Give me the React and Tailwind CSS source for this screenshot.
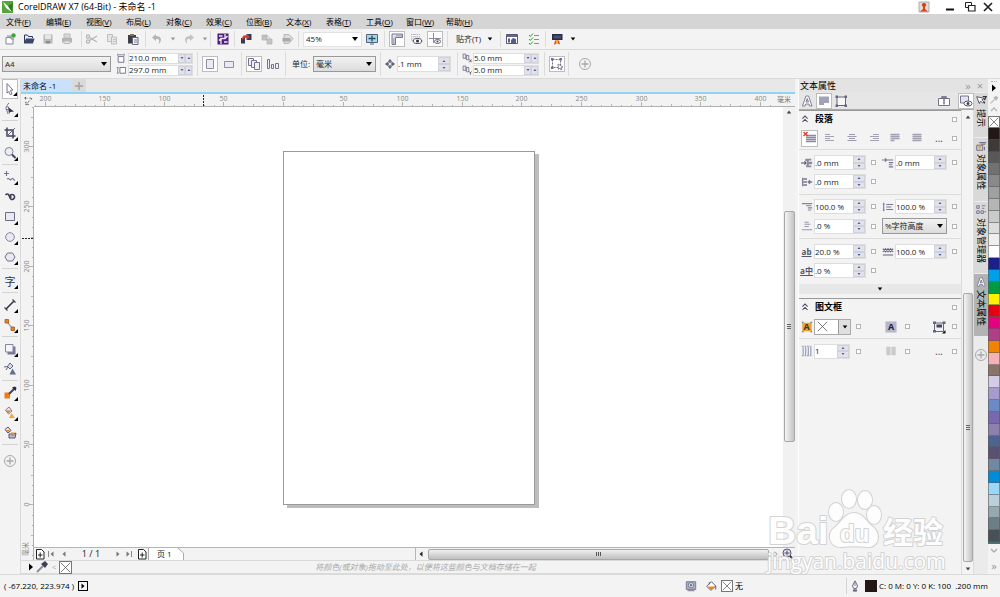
import { useState } from 'react'

const MENUS = [
  ['文件', 'F'], ['编辑', 'E'], ['视图', 'V'], ['布局', 'L'], ['对象', 'C'], ['效果', 'C'],
  ['位图', 'B'], ['文本', 'X'], ['表格', 'T'], ['工具', 'O'], ['窗口', 'W'], ['帮助', 'H'],
]

const SWATCHES = [
  '#231815', '#3e3a39', '#595757', '#727171', '#898989', '#9fa0a0', '#b5b5b6', '#c9caca', '#dcdddd',
  '#efefef', '#ffffff', '#1d2088', '#00a0e9', '#009944', '#fff100', '#e60012', '#e4007f', '#b04085',
  '#f08300', '#f5b1b5', '#8a7468', '#d3cce8', '#a69bcc', '#6e8ac6', '#7768b0', '#8d80ae', '#4d6490',
  '#5a5072', '#7088a4', '#008cd6', '#9bd7f6', '#b9cfdb', '#96a8b0', '#6e7e86', '#485058',
]

// 14 x 14 glyphs, one unit per pixel
const GLYPHS = {
  new: <><path d="M3 5.500h5l2 2V12H3z" fill="#fff" stroke="#85859d" /><path d="M4 4h4v3h3" fill="none" stroke="#85859d" /><circle cx="10.500" cy="3.500" r="2.200" fill="#3fa535" /></>,
  open: <><path d="M2.500 11V3h3l1 1.500h4V6" fill="#e6e9f2" stroke="#2f3a5c" /><path d="M2 11.500L4 6.500h8.500L11 11.500z" fill="#3a4669" /></>,
  save: <><path d="M2.500 2.500h9v9h-9z" fill="#b9b9b9" /><path d="M4 3h6v4H4z" fill="#e6e6e6" /><path d="M5 9h4v2.500H5z" fill="#8f8f8f" /></>,
  print: <><path d="M4 2h6v4H4z" fill="#d9d9d9" stroke="#bbb" /><path d="M2 6h10v4.500H2z" fill="#b5b5b5" /><path d="M4 9h6v2.500H4z" fill="#e6e6e6" stroke="#bbb" /></>,
  cut: <g fill="none" stroke="#b3b3b3" strokeWidth="1.200"><path d="M4.500 5.500L12 10M4.500 8.500L12 4" /><circle cx="3" cy="4.500" r="1.600" /><circle cx="3" cy="9.500" r="1.600" /></g>,
  copy: <g fill="#e6e6e6" stroke="#bdbdbd"><path d="M2.500 2.500h5v7h-5z" /><path d="M6.500 5h5v7h-5z" /><path d="M8 7.500h2.500M8 9.500h2.500" /></g>,
  paste: <><path d="M2 3h8v8.500H2z" fill="#3d3d45" /><path d="M4 2h4v2H4z" fill="#85714d" /><path d="M6.500 5.500h5.500v7H6.500z" fill="#f0f0f5" stroke="#666a7d" /><path d="M8 8h3M8 10h3" stroke="#85859d" /></>,
  undo: <path d="M6 2L2 5.500l4 3.500V7c3-.5 4 1 2.500 5C13 8.500 11 3.800 6 4z" fill="#b5b5b5" />,
  redo: <path d="M8 2l4 3.500L8 9V7c-3-.5-4 1-2.500 5C1 8.500 3 3.800 8 4z" fill="#c4c4c4" />,
  connect: <><path d="M1.500 1.500h11v11h-11z" fill="#4d1e7a" /><path d="M5 12V6.500h4V2M5 6.500L3 8.500M9 6.500l2.500-2.500M3 4h3.500M8 10h3.500" fill="none" stroke="#f0e9fc" strokeWidth="1.300" /></>,
  import: <><path d="M2 6h4v5.500H2z" fill="#353b52" /><path d="M7.500 2h5v6h-5z" fill="#353b52" /><path d="M3 6c1-3 3-3 5-2.500V2l3 3-3 2.500V6C6 5.500 5 6.500 3 8z" fill="#d73a25" /></>,
  export: <g fill="#c5c5c5" stroke="#b0b0b0" strokeWidth=".7"><path d="M2 3h5v5H2z" /><path d="M7 7h5v5H7z" /><path d="M3 6c2-3 6-3 7 1" fill="none" /></g>,
  pdf: <><path d="M3 2.500h5l4 4-4 5H3z" fill="#dcdcdc" stroke="#b8b8b8" /><path d="M1.500 6h8v3.500h-8z" fill="#aaa" /></>,
  fullscreen: <><path d="M1.500 2.500h11v8h-11z" fill="#a9d6e6" stroke="#50647d" /><path d="M7 3.500v6M3.500 6.500h7" stroke="#24506b" strokeWidth="1.300" /><path d="M5 12h4" stroke="#50647d" /></>,
  rulers: <><path d="M2 2h10.500v3.500h-7v7H2z" fill="#dfe0ee" stroke="#75758f" /><path d="M7 3v1.500M9 3v1.500M11 3v1.500M3 7h1.500M3 9h1.500M3 11h1.500" stroke="#75758f" /></>,
  gridEye: <><path d="M2 2.500h9M2 5h9M2 7.500h3M3 2v8M5.500 2v4M8 2v3M10.500 2v3" stroke="#a5a5b7" strokeWidth=".7" strokeDasharray="1 1" /><ellipse cx="8.500" cy="9" rx="4.300" ry="2.500" fill="#fff" stroke="#44445a" /><circle cx="8.500" cy="9" r="1.500" fill="#30303c" /></>,
  guideEye: <><path d="M5.500 1v10M1 6.500h12" stroke="#8c8ca1" /><ellipse cx="9.500" cy="9.500" rx="3" ry="2" fill="#fff" stroke="#65657d" /><circle cx="9.500" cy="9.500" r="1" fill="#44445a" /></>,
  options: <><path d="M1.500 2.500h11v9h-11z" fill="#fff" stroke="#55587d" /><path d="M2 3h10v2H2z" fill="#62668e" /><path d="M3 6.500h2v4H3zM6 8l2-2 3 1v4H6z" fill="#555c85" /></>,
  checklist: <><path d="M2 3l1.300 1.500L6 1.500M2 7l1.300 1.500L6 5.500M2 11l1.300 1.500L6 9.500" fill="none" stroke="#3a9c4a" /><path d="M7 3.500h5M7 7.500h5M7 11.500h5" stroke="#8a8aa0" /></>,
  launcher: <><path d="M2 2h10.500v6H2z" fill="#262c45" /><path d="M3.500 3.500h7.500v3H3.500z" fill="#485077" /><path d="M5 8.500h4l1 4-3-1.500L4 13z" fill="#e0452a" /><path d="M6 8.500h2v3H6z" fill="#ffb400" /></>,
  portrait: <path d="M3.500 2.500h7v9h-7z" fill="#eaeaf2" stroke="#8f8fa6" />,
  landscape: <path d="M2.500 4.500h9v6h-9z" fill="#eaeaf2" stroke="#8f8fa6" />,
  allPages: <g fill="#eeeef6" stroke="#75758f"><path d="M1.500 1.500h5v7h-5z" /><path d="M4.500 3.500h5v7h-5z" /><path d="M7.500 5.500h5v7h-5z" /></g>,
  curPage: <g fill="#eeeef6" stroke="#75758f"><path d="M1.500 2.500v9h2v-9z" /><path d="M5.500 7.500h2v4h-2z" /><path d="M9.500 6.500h3v5h-3z" /></g>,
  nudge: <><path d="M7 0l3 4H4zM7 14l3-4H4zM0 7l4-3v6zM14 7l-4-3v6z" fill="#55556b" /><path d="M5 5h4v4H5z" fill="#fff" stroke="#55556b" /></>,
  treat: <><path d="M2.500 2.500h8v8h-8z" fill="none" stroke="#6d6d88" strokeDasharray="2 1" /><path d="M1 1h2.500v2.500H1zM9.500 1H12v2.500H9.500zM1 9.500h2.500V12H1z" fill="#6d6d88" /><path d="M8 7l5 3-2 .5 1 2-1 .5-1-2-1.500 1.500z" fill="#fff" stroke="#6d6d88" strokeWidth=".8" /></>,
  plus: <g fill="none" stroke="#a9a9a9"><circle cx="7" cy="7" r="5.500" /><path d="M7 3.500v7M3.500 7h7" strokeWidth="1.300" /></g>,
  pick: <path d="M4 1.500l6 6.500-2.500.200L9 12l-1.700.800L6 9.500 4 11z" fill="#fff" stroke="#75758f" />,
  shape: <><path d="M6 1C2.500 4 3.500 8 5 12" fill="none" stroke="#75758f" /><path d="M5 5l6 4.500-4 .5-1 2z" fill="#34344a" /><path d="M3 5h2.500v2.500H3z" fill="#fff" stroke="#55556b" strokeWidth=".7" /></>,
  crop: <><path d="M4 1.500v8.500h8.500M1.500 4H10v8.500" fill="none" stroke="#44445c" strokeWidth="1.500" /><path d="M12 2L4 10" stroke="#62627c" /></>,
  zoom: <><circle cx="6" cy="5.500" r="4" fill="#ececf4" stroke="#85859d" /><path d="M9 8.500l3.500 3.500" stroke="#44445c" strokeWidth="2" /></>,
  freehand: <path d="M3.500 1v5M1 3.500h5M4 9c2-2 2.500 2 4 .5s2-2 2.500 0l1.500 1" fill="none" stroke="#72728a" strokeWidth="1.100" />,
  artistic: <path d="M2.500 5c2-2 3.500-.5 4 1.500s2 4 4 2.500 1-4.500-1.500-4.500-2 2.500-.5 3" fill="none" stroke="#3f3f57" strokeWidth="1.600" />,
  rect: <path d="M2.500 2.500h9v8h-9z" fill="#e9e9f2" stroke="#6d6d88" />,
  ellipse: <circle cx="7" cy="7" r="4.300" fill="#e9e9f2" stroke="#85859d" />,
  polygon: <path d="M4.500 3h5L12 7l-2.500 4h-5L2 7z" fill="#e9e9f2" stroke="#72728a" />,
  dimension: <><path d="M3 11L11 3" stroke="#33333f" strokeWidth="1.600" /><path d="M1.500 9.500l3 3M9.500 1.500l3 3" stroke="#44445c" strokeWidth="1.300" /></>,
  connector: <><path d="M4 4l6 7" stroke="#72728a" /><path d="M2 1.500h3.500V5H2zM8 9h3.500v3.500H8z" fill="#f08218" stroke="#914d18" strokeWidth=".7" /></>,
  shadow: <><path d="M4.500 4.500h8v8h-8z" fill="#77779a" /><path d="M2.500 2.500h7.500v7.500H2.500z" fill="#f4f4fb" stroke="#85859d" /></>,
  transparency: <><path d="M1 5l4-.5M4.500 4.500L7 1l3 3-3 3z" fill="#d9dbeb" stroke="#65657d" /><path d="M3 8l2-3" stroke="#65657d" /><path d="M9.500 6.500l3.500 6H6.500z" fill="#656c91" /></>,
  eyedropper: <><path d="M1.500 6.500H7V12.500H1.500z" fill="#ee7d12" /><path d="M6 8l5-5" stroke="#44445c" strokeWidth="2" /><path d="M9 1.500l3.500 3.500 1-3-1.500-1.500z" fill="#26263c" /></>,
  fill: <><path d="M2.500 4L6 1l3 4-3.500 3z" fill="#e8e8f0" stroke="#65657d" strokeWidth=".8" /><path d="M3 4.500h5L5.500 7z" fill="#dc7b24" /><path d="M8.500 7l3.500 5H6z" fill="#efad3f" /></>,
  smartFill: <><path d="M2 3.500L5 1l3 3.500L5 7z" fill="#e8e8f0" stroke="#55556b" /><path d="M3 4h4L5 6z" fill="#dc7b24" /><path d="M6 8h4l3-1-1 5H6z" fill="#bfc3da" stroke="#55556b" /><path d="M8 6.500h3.500V10H8z" fill="#e08a34" /></>,
  charA: <path d="M2.500 12L6 2h2.500L12 12H9.500L9 10H5.500L5 12zM6 8h2.500L7.200 4.500z" fill="#fff" stroke="#74748c" strokeWidth=".9" />,
  para: <path d="M2 2.500h10v6.500H7v2H2z" fill="#a3a3b8" />,
  frame: <><path d="M3 3h8.500v8.500H3z" fill="#f7f7fb" stroke="#65657d" /><path d="M1.500 1.500h2.500V4H1.500zM10.500 1.500H13V4h-2.500zM1.500 10.500h2.500V13H1.500zM10.500 10.500H13V13h-2.500zM6 2h2M6 12.500h2" fill="#65657d" /></>,
  help: <><path d="M1.500 4.500h11v7h-11z" fill="#fff" stroke="#75758f" /><path d="M5 5V3h4v2M7 4.500v6" fill="none" stroke="#65657d" strokeWidth="1.300" /></>,
  preview: <><path d="M1.500 2h8v7h-8z" fill="#e3e3ec" stroke="#75758f" /><ellipse cx="9" cy="9.500" rx="4" ry="2.500" fill="#fff" stroke="#55556b" /><circle cx="9" cy="9.500" r="1.500" fill="#44445c" /></>,
  noAlign: <><path d="M3 4.500h10M3 6.500h10M3 8.500h10M3 10.500h10" stroke="#8a8aa2" strokeWidth="1.500" /><path d="M.5 1l4 4M4.500 1l-4 4" stroke="#e0402a" strokeWidth="1.500" /></>,
  alignL: <path d="M2 3.500h5M2 5.500h9M2 7.500h5M2 9.500h9" stroke="#a2a2b1" strokeWidth="1.200" />,
  alignC: <path d="M4 3.500h6M2.500 5.500h9M4 7.500h6M2.500 9.500h9" stroke="#9c9cad" strokeWidth="1.200" />,
  alignR: <path d="M6 3.500h6M3 5.500h9M6 7.500h6M3 9.500h9" stroke="#a2a2b1" strokeWidth="1.200" />,
  justify: <path d="M2.500 3.500h9M2.500 5.500h9M2.500 7.500h9M2.500 9.500h4" stroke="#a2a2b1" strokeWidth="1.500" />,
  force: <path d="M2.500 3.500h9M2.500 5.500h9M2.500 7.500h9M2.500 9.500h9" stroke="#a2a2b1" strokeWidth="1.500" />,
  indentL: <><path d="M5 2h7v2H9v1.500h4v3H9V10h3v2H6V9h1V5H5z" fill="#8b8ba0" /><path d="M0 7h6M4 5l2 2-2 2" fill="none" stroke="#55556b" strokeWidth="1.200" /></>,
  indentF: <path d="M0 3.500h5M3.500 1.500l2 2-2 2M6 3.500h7M8 6.500h5M8 9h4M8 11.500h5" fill="none" stroke="#77778f" strokeWidth="1.300" />,
  indentR: <path d="M2 2v10M3 3.500h4M3 7h4M3 10.500h4M13 7H8M10.500 5L8.500 7l2 2" fill="none" stroke="#77778f" strokeWidth="1.500" />,
  before: <path d="M1 3h12M6 5.500h6M8 8h5M8 10.500h4" stroke="#85859b" strokeWidth="1.300" />,
  line: <path d="M2 2v10M1 3.500h2M1 10.500h2M5 4h8M5 7h6M5 10h8" stroke="#77778f" strokeWidth="1.200" />,
  after: <path d="M4 2.500h5M4 5h7M4 7.500h5M1 11.500h12" stroke="#9a9aaa" strokeWidth="1.200" />,
  word: <path d="M1 3l3 4 3-4 3 4 3-4M1 7l3-4 3 4 3-4 3 4M1 10.500h12" stroke="#62627c" strokeWidth="1.200" fill="none" />,
  frameFill: <><path d="M1.500 2h11v10h-11z" fill="#f0a22c" /><path d="M1 1.500h2M11 1.500h2M1 12.500h2M11 12.500h2" stroke="#62627c" strokeWidth="1.300" /></>,
  textBg: <path d="M.5 .5h13v13H.5z" fill="#b7b7ca" />,
  frameAlign: <><path d="M2.500 3h9v8.500h-9z" fill="#f0f0f7" stroke="#65657d" /><path d="M1 1.500h3V4H1zM10.500 1.500h3V4h-3zM1 10h3v2.500H1z" fill="#65657d" /><path d="M4.500 4.500h5.500v3H4.500z" fill="#44445c" /><path d="M13.500 10v3.500H10z" fill="#111" /></>,
  cols: <><path d="M2.500 2.500v9.500M5.500 2.500v9.500M8.500 2.500v9.500M11.500 2.500v9.500" stroke="#7580a0" /><path d="M1 1.500h12M1 12.500h12" stroke="#85859b" strokeDasharray="2 1" /></>,
  evenCols: <path d="M1.500 2h5v10h-5zM7.500 2h5v10h-5z" fill="#cacaca" />,
  hint: <><path d="M2 2l3 8 1.500-3L9 9.500 10.500 8 8 5.500 11 4z" fill="#fff" stroke="#44445c" /><path d="M9 2h4l-2 4M11 8v2" stroke="#33333f" fill="none" strokeWidth="1.400" /></>,
  objProps: <><path d="M2 6h7v6H2z" fill="#cdd0e4" stroke="#65657d" /><path d="M5 3h8M7 5h5M11 8v4" stroke="#72728a" strokeWidth="1.300" /><path d="M4 7h3v3H4z" fill="#e0a14a" /></>,
  objManager: <path d="M2 2h3v3H2zM8 2h4M8 5h3M2 8h3v3H2zM7 8h3v3H7zM11 9h2" fill="#c9cce2" stroke="#72728a" />,
  picker: <><path d="M2 12l6-6" stroke="#8b8b9a" strokeWidth="1.800" /><path d="M6 4l4 4 3-4-3-3z" fill="#3d4255" /></>,
  pickerOff: <><path d="M2 12l6-6" stroke="#c4c4c4" strokeWidth="1.800" /><path d="M6 4l4 4 3-4-3-3z" fill="#b5b5b5" /></>,
  addPage: <><path d="M3.500 2.500h5l2.500 2.500v7H3.500z" fill="#fff" stroke="#222" /><path d="M7.200 5.500v5M5 8h4.500" stroke="#222" /></>,
  navigator: <><circle cx="6" cy="6" r="4" fill="#dfe1ee" stroke="#55556b" /><path d="M9 9l4 4" stroke="#33333f" strokeWidth="1.800" /><path d="M6 3.500v5M3.500 6h5" stroke="#55556b" /></>,
  proof: <><path d="M1.500 2h11v9h-11z" fill="#a9adc6" stroke="#6d7191" /><circle cx="7" cy="6" r="3.200" fill="#e6cbd1" stroke="#5e8295" /><circle cx="7" cy="6" r="1.200" fill="#65657d" /><path d="M3 12.500h8" stroke="#65657d" /></>,
  bucket: <><path d="M2 7.500L7.500 2l5 5L7 12z" fill="#fff" stroke="#44445c" /><path d="M3.500 7.500h8L7 12z" fill="#ee8420" /><path d="M5 5V2.500M12.500 7v4" stroke="#44445c" /></>,
  pen: <><path d="M7 1L4 7l1.500 3h3L10 7z" fill="#f2f2f8" stroke="#55556b" /><path d="M7 3v4M5 11.500h4v1.500H5z" fill="#77778f" stroke="#55556b" strokeWidth=".8" /></>,
  user: <><path d="M2 2h10v10H2z" fill="#e3dcd6" stroke="#b0aca8" /><path d="M7 3a2 2 0 0 1 1 3.800V9l3 2.500H3L6 9V6.800A2 2 0 0 1 7 3z" fill="#d8431f" /></>,
  restore: <><path d="M2.500 2.500h6v5h-6z" fill="#fff" stroke="#222" /><path d="M5.500 5.500h6.500v5.500H5.500z" fill="#fff" stroke="#222" strokeWidth="1.200" /></>,
  close: <path d="M3 3l8 8M11 3l-8 8" stroke="#222" strokeWidth="1.700" />,
  minimize: <path d="M3 9.500h8" stroke="#111" strokeWidth="2" />,
  origin: <><path d="M2 3h4M3.500 1.500V5M5 11l5-5" stroke="#33333f" strokeWidth="1.200" strokeDasharray="2 1" /><path d="M9 3h3v3M4 8v4h4" fill="none" stroke="#33333f" strokeWidth="1.200" strokeDasharray="2 1" /></>,
  cross: <path d="M1 1l12 12M13 1L1 13" stroke="#444" strokeWidth=".9" />,
  width: <><path d="M3 5h8v8H3z" fill="#fff" stroke="#65657d" strokeWidth="1.200" /><path d="M2.500 1v3M11.500 1v3M3 2.500h8" stroke="#65657d" /></>,
  height: <><path d="M5.500 3.500h8v8h-8z" fill="#fff" stroke="#65657d" strokeWidth="1.200" /><path d="M1 3.500h3M1 11.500h3M2.500 4v7" stroke="#65657d" /></>,
  dupX: <><path d="M1.500 1.500h4v6h-4zM6 3.500h3.500v6H6z" fill="#e5e5f0" stroke="#62627c" /><path d="M10 9l3.500 4M13.500 9L10 13" stroke="#33333f" /></>,
  dupY: <><path d="M1.500 1.500h4v6h-4zM6 3.500h3.500v6H6z" fill="#e5e5f0" stroke="#62627c" /><path d="M10 9l1.700 2L13.500 9M11.700 11v2.500" stroke="#33333f" fill="none" /></>,
  collapse: <path d="M4 6.500l3-3 3 3M4 10.500l3-3 3 3" fill="none" stroke="#44445c" strokeWidth="1.200" />,
}

function Glyph({ name, className = 'size-3.5' }) {
  return <svg viewBox="0 0 14 14" className={`shrink-0 ${className}`} aria-hidden="true">{GLYPHS[name]}</svg>
}

const ARROWS = { down: 'M1 2h6L4 6z', up: 'M1 6h6L4 2z', left: 'M6 0.500v7L2 4z', right: 'M2 0.500v7L6 4z' }

function Arrow({ dir, className = 'size-2 fill-black' }) {
  return <svg viewBox="0 0 8 8" className={`shrink-0 ${className}`} aria-hidden="true"><path d={ARROWS[dir]} /></svg>
}

function Tool({ name, label, boxed, className = 'size-4' }) {
  return (
    <button
      type="button"
      aria-label={label}
      className={`flex shrink-0 items-center justify-center ${boxed ? 'border border-[#bdbdbd] bg-white' : ''} ${className}`}
    >
      <Glyph name={name} />
    </button>
  )
}

function Group({ className, children }) {
  return <div className={`my-0.5 flex shrink-0 items-center border-r border-[#dcdcdc] ${className}`}>{children}</div>
}

function Drop({ label, value, className }) {
  return (
    <div className={`relative flex shrink-0 items-center ${className}`}>
      <select aria-label={label} className="h-full w-full appearance-none pl-0.5 outline-none">
        <option>{value}</option>
      </select>
      <Arrow dir="down" className="pointer-events-none absolute right-0.5 size-2 fill-black" />
    </div>
  )
}

// number box with its two arrows; `flat` puts them side by side
function Spin({ label, value, flat, className = 'h-[15px] w-[52px]' }) {
  return (
    <div className={`flex shrink-0 border border-[#dedede] bg-white ${className}`}>
      <input aria-label={label} defaultValue={value} className="min-w-0 flex-1 bg-transparent outline-none" />
      <div className={`flex bg-[#e2e3ea] ${flat ? 'w-3.5 flex-row-reverse' : 'w-3 flex-col'}`}>
        <button type="button" aria-label={`${label} +`} className="flex min-h-0 flex-1 items-center justify-center border border-[#d0d1d9]">
          <Arrow dir="up" className="size-1 fill-[#4a5cab]" />
        </button>
        <button type="button" aria-label={`${label} -`} className="flex min-h-0 flex-1 items-center justify-center border border-[#d0d1d9]">
          <Arrow dir="down" className="size-1 fill-[#4a5cab]" />
        </button>
      </div>
    </div>
  )
}

function Lock({ label }) {
  return <input type="checkbox" aria-label={label} className="size-[5px] shrink-0 appearance-none justify-self-center border border-[#b5b5b5] bg-white" />
}

function TitleBar() {
  return (
    <header className="flex h-[14px] shrink-0 items-center bg-white pl-0.5 text-[9px] text-black">
      <svg viewBox="0 0 12 12" className="mr-1 size-3" aria-hidden="true">
        <path d="M0 0h11v12H0z" fill="#55a53a" />
        <path d="M1 1l5 4 4 6-6-4z" fill="#fff" />
        <path d="M11 2L6 5l4 6z" fill="#2f7a27" />
      </svg>
      <h1>CorelDRAW X7 (64-Bit) - 未命名 -1</h1>
      <div className="ml-auto flex items-center pr-1">
        <Tool name="user" label="用户" className="mr-2 h-3.5 w-4" />
        <Tool name="minimize" label="最小化" className="h-3.5 w-5" />
        <Tool name="restore" label="还原" className="h-3.5 w-5" />
        <Tool name="close" label="关闭" className="h-3.5 w-4" />
      </div>
    </header>
  )
}

function MenuBar() {
  return (
    <nav className="flex h-[15px] shrink-0 items-center bg-[#d5d5d5] pl-1.5 text-black">
      {MENUS.map(([name, key]) => (
        <button key={name} type="button" className="w-10 shrink-0 text-left whitespace-nowrap">
          {name}(<u>{key}</u>)
        </button>
      ))}
    </nav>
  )
}

function StandardBar() {
  return (
    <div className="flex h-[21px] shrink-0 border-b border-[#dadada]">
      <Group className="w-[82px] justify-around pr-1">
        <Tool name="new" label="新建" />
        <Tool name="open" label="打开" />
        <Tool name="save" label="保存" />
        <Tool name="print" label="打印" />
      </Group>
      <Group className="w-16 justify-around pr-0.5">
        <Tool name="cut" label="剪切" />
        <Tool name="copy" label="复制" />
        <Tool name="paste" label="粘贴" />
      </Group>
      <Group className="w-[65px] justify-around">
        <Tool name="undo" label="撤消" />
        <Arrow dir="down" className="size-1.5 fill-[#9a9a9a]" />
        <Tool name="redo" label="重做" />
        <Arrow dir="down" className="size-1.5 fill-[#9a9a9a]" />
      </Group>
      <Group className="w-6 justify-center">
        <Tool name="connect" label="搜索内容" />
      </Group>
      <Group className="w-16 justify-around">
        <Tool name="import" label="导入" />
        <Tool name="export" label="导出" />
        <Tool name="pdf" label="发布为 PDF" />
      </Group>
      <Group className="w-[86px] gap-0.5 pl-1">
        <Drop label="缩放级别" value="45%" className="h-[15px] w-[59px] border border-[#e2e2e2] bg-white" />
        <Tool name="fullscreen" label="全屏预览" />
      </Group>
      <Group className="w-[63px] justify-between px-1">
        <Tool name="rulers" label="显示标尺" boxed />
        <Tool name="gridEye" label="显示网格" />
        <Tool name="guideEye" label="显示辅助线" boxed />
      </Group>
      <Group className="w-[53px] pl-2">
        <button type="button" className="flex items-center gap-1.5 whitespace-nowrap">
          贴齐(T)
          <Arrow dir="down" className="size-1.5 fill-black" />
        </button>
      </Group>
      <Group className="w-[45px] justify-around">
        <Tool name="options" label="选项" />
        <Tool name="checklist" label="设置" />
      </Group>
      <button type="button" aria-label="应用程序启动器" className="flex items-center gap-1.5 pl-1">
        <Glyph name="launcher" />
        <Arrow dir="down" className="size-1.5 fill-black" />
      </button>
    </div>
  )
}

function PropertyBar() {
  return (
    <div className="flex h-[29px] shrink-0 border-b border-[#dadada]">
      <Group className="w-[198px] gap-[5px] pl-0.5">
        <Drop label="页面大小" value="A4" className="h-4 w-[109px] border border-[#999] bg-linear-to-b from-[#f2f2f2] to-[#dcdcdc]" />
        <div className="flex flex-col gap-px">
          <label className="flex items-center gap-0.5">
            <Glyph name="width" className="size-2.5" />
            <Spin label="页面宽度" value="210.0 mm" flat className="h-[11px] w-[65px]" />
          </label>
          <label className="flex items-center gap-0.5">
            <Glyph name="height" className="size-2.5" />
            <Spin label="页面高度" value="297.0 mm" flat className="h-[11px] w-[65px]" />
          </label>
        </div>
      </Group>
      <Group className="w-11 justify-between px-1">
        <Tool name="portrait" label="纵向" boxed />
        <Tool name="landscape" label="横向" />
      </Group>
      <Group className="w-11 justify-between px-1">
        <Tool name="allPages" label="所有页面" boxed />
        <Tool name="curPage" label="当前页" />
      </Group>
      <Group className="w-[95px] justify-between pr-1 pl-1.5">
        <span className="whitespace-nowrap">单位:</span>
        <Drop label="单位" value="毫米" className="h-4 w-[63px] border border-[#999] bg-linear-to-b from-[#f2f2f2] to-[#dcdcdc]" />
      </Group>
      <Group className="w-[77px] justify-between pr-1.5 pl-1">
        <Glyph name="nudge" className="size-2.5" />
        <Spin label="微调距离" value=".1 mm" className="h-4 w-[54px]" />
      </Group>
      <Group className="w-[87px] pl-1">
        <div className="flex flex-col gap-px">
          <label className="flex items-center gap-px">
            <Glyph name="dupX" className="size-2.5" />
            <Spin label="再制距离 X" value="5.0 mm" flat className="h-[11px] w-[66px]" />
          </label>
          <label className="flex items-center gap-px">
            <Glyph name="dupY" className="size-2.5" />
            <Spin label="再制距离 Y" value="5.0 mm" flat className="h-[11px] w-[66px]" />
          </label>
        </div>
      </Group>
      <Group className="w-6 justify-center">
        <Tool name="treat" label="所有对象视为已填充" boxed />
      </Group>
      <Tool name="plus" label="自定义" className="ml-2 h-full w-4" />
    </div>
  )
}

const TOOL_GROUPS = [
  [['pick', '选择', 1], ['shape', '形状', 1]],
  [['crop', '裁剪', 1], ['zoom', '缩放', 1]],
  [['freehand', '手绘', 1], ['artistic', '艺术笔'], ['rect', '矩形', 1], ['ellipse', '椭圆形', 1], ['polygon', '多边形', 1]],
  [['text', '文本', 1]],
  [['dimension', '平行度量', 1], ['connector', '直线连接器', 1]],
  [['shadow', '阴影', 1], ['transparency', '透明度']],
  [['eyedropper', '颜色滴管', 1], ['fill', '交互式填充', 1], ['smartFill', '智能填充']],
]

function Toolbox() {
  const [active, setActive] = useState('pick')

  return (
    <aside className="flex w-[21px] shrink-0 flex-col items-center border-r border-[#dadada]">
      {TOOL_GROUPS.map((group) => (
        <div key={group[0][0]} className="border-b border-[#d3d3d3] pt-0.5 pb-px first:pt-0">
          {group.map(([name, label, flyout]) => (
            <button
              key={name}
              type="button"
              aria-label={label}
              onClick={() => setActive(name)}
              className={`relative flex h-5 w-4 items-center justify-center ${active === name ? 'border border-[#bcbcbc] bg-white' : ''}`}
            >
              {name === 'text' ? <span className="text-[11px] leading-none text-[#33334a]">字</span> : <Glyph name={name} />}
              {flyout && (
                <svg viewBox="0 0 4 4" className="absolute right-0 bottom-0.5 size-1" aria-hidden="true"><path d="M4 0v4H0z" /></svg>
              )}
            </button>
          ))}
        </div>
      ))}
      <Tool name="plus" label="自定义" className="h-8 w-4" />
    </aside>
  )
}

const STEP = 59.6
const MAJORS = Array.from({ length: 26 }, (_, i) => i - 9)
const MINORS = [1, 2, 3, 4, 5]

function HRuler() {
  return (
    <svg className="h-[13px] min-w-0 flex-1" aria-label="水平标尺">
      {MAJORS.map((m) => {
        const x = Math.round(249 + m * STEP) + 0.5
        return (
          <g key={m} stroke="#b3b3b3">
            <path d={`M${x} 8v4`} />
            {MINORS.map((n) => <path key={n} d={`M${Math.round(x + (n * STEP) / 6) + 0.5} ${n === 3 ? 10 : 11}v2`} />)}
            {m >= -4 && m <= 8 && (
              <text x={x} y="7" textAnchor="middle" stroke="none" fill="#8a8a8a" className="text-[7px]">{Math.abs(m * 50)}</text>
            )}
          </g>
        )
      })}
      <path d="M169.500 1v12" stroke="#222" strokeDasharray="2 1" />
      <path d="M0 12.500h2000" stroke="#b0b0b0" />
    </svg>
  )
}

function VRuler() {
  return (
    <div className="relative w-[13px] shrink-0">
      <svg className="absolute inset-0 h-full w-full" aria-label="垂直标尺">
        {MAJORS.map((m) => {
          const y = Math.round(397 - m * STEP) + 0.5
          return (
            <g key={m} stroke="#b3b3b3">
              <path d={`M8 ${y}h4`} />
              {MINORS.map((n) => <path key={n} d={`M${n === 3 ? 10 : 11} ${Math.round(y - (n * STEP) / 6) + 0.5}h2`} />)}
              {m >= 0 && m <= 6 && (
                <text transform={`translate(8 ${y}) rotate(-90)`} textAnchor="middle" stroke="none" fill="#8a8a8a" className="text-[7px]">{m * 50}</text>
              )}
            </g>
          )
        })}
        <path d="M1 131.500h12" stroke="#222" strokeDasharray="2 1" />
        <path d="M12.500 0v2000" stroke="#b0b0b0" />
      </svg>
      <span className="absolute bottom-1 left-0 rotate-180 text-[7px] leading-[10px] text-[#8a8a8a] [text-orientation:sideways] [writing-mode:vertical-rl]">毫米</span>
    </div>
  )
}

function PageNav() {
  return (
    <div className="flex h-[13px] shrink-0 border-t border-[#b5b5b5]">
      <div className="flex w-[381px] shrink-0 items-center">
        <Tool name="addPage" label="在前面添加页" className="h-3 w-3" />
        <button type="button" aria-label="第一页" className="ml-0.5 flex items-center"><i className="h-1.5 w-px bg-[#888]" /><Arrow dir="left" className="size-1.5 fill-[#777]" /></button>
        <button type="button" aria-label="上一页" className="ml-1.5"><Arrow dir="left" className="size-1.5 fill-[#777]" /></button>
        <span className="w-12 text-center text-[9px]">1 / 1</span>
        <button type="button" aria-label="下一页"><Arrow dir="right" className="size-1.5 fill-[#777]" /></button>
        <button type="button" aria-label="最后一页" className="ml-1 mr-1 flex items-center"><Arrow dir="right" className="size-1.5 fill-[#777]" /><i className="h-1.5 w-px bg-[#888]" /></button>
        <Tool name="addPage" label="在后面添加页" className="h-3 w-3" />
        <div className="flex h-full items-center">
          <button type="button" className="h-full border-l border-[#aaa] bg-white pr-1 pl-2 leading-none whitespace-nowrap">页 1</button>
          <svg viewBox="0 0 8 12" className="h-full w-2" aria-hidden="true"><path d="M0 0l8 6v6H0z" fill="#fff" /><path d="M2 0l5.500 5v7" fill="none" stroke="#aaa" /></svg>
        </div>
      </div>
      <div className="flex min-w-0 flex-1 items-center border-l border-[#b5b5b5]">
        <Arrow dir="left" className="mx-0.5 size-1.5 fill-[#222]" />
        <div className="ml-0.5 flex h-[11px] min-w-0 flex-1 items-center justify-center gap-px rounded-xs border border-[#a8a8a8] bg-linear-to-b from-[#f0f0f0] to-[#bfbfbf]">
          <i className="h-1 w-px bg-[#555]" /><i className="h-1 w-px bg-[#555]" /><i className="h-1 w-px bg-[#555]" />
        </div>
        <Arrow dir="right" className="mr-0.5 ml-1 size-1.5 fill-[#222]" />
        <Tool name="navigator" label="导航器" className="h-3 w-3.5" />
      </div>
    </div>
  )
}

function VThumb({ className }) {
  return (
    <div className={`flex flex-col items-center justify-center gap-px rounded-xs border border-[#a8a8a8] bg-linear-to-r from-[#f4f4f4] to-[#c4c4c4] ${className}`}>
      <i className="h-px w-1 bg-[#666]" /><i className="h-px w-1 bg-[#666]" /><i className="h-px w-1 bg-[#666]" />
    </div>
  )
}

function Workspace() {
  return (
    <main className="flex min-w-0 flex-1 flex-col">
      <div className="flex h-[13px] shrink-0 items-center bg-[#e8e8e8]">
        <button type="button" className="h-full w-[51px] bg-[#cbe1fb] pl-0.5 text-left leading-none whitespace-nowrap text-black">未命名 -1</button>
        <button type="button" aria-label="新建文档" className="flex h-full w-3.5 items-center justify-center bg-[#dadada]">
          <svg viewBox="0 0 8 8" className="size-2"><path d="M4 0v8M0 4h8" stroke="#a3a3a3" strokeWidth="1.500" /></svg>
        </button>
      </div>
      <div className="h-0.5 shrink-0 bg-[#8fd3f5]" />
      <div className="flex shrink-0">
        <div className="flex w-[13px] items-center justify-center"><Glyph name="origin" className="size-2.5" /></div>
        <HRuler />
        <span className="w-[18px] border-b border-[#b0b0b0] text-[7px] leading-[11px] whitespace-nowrap text-[#777]">毫米</span>
      </div>
      <div className="flex min-h-0 flex-1">
        <VRuler />
        <div className="flex min-w-0 flex-1 flex-col">
          <div className="flex min-h-0 flex-1">
            <div className="min-w-0 flex-1 overflow-hidden bg-white pt-11 pl-[249px]">
              <div className="h-[354px] w-[252px] border border-[#9a9a9a] bg-white shadow-[4px_3px_0_#bdbdbd]" />
            </div>
            <div className="flex w-3 shrink-0 flex-col items-center bg-[#f1f1f1]">
              <Arrow dir="up" className="mt-0.5 size-1.5 fill-[#444]" />
              <div className="flex-[97]" />
              <VThumb className="w-[11px] flex-[230]" />
              <div className="flex-[106]" />
            </div>
          </div>
          <PageNav />
        </div>
      </div>
      <div className="flex h-[14px] shrink-0 items-center border-t border-b border-[#dadada] pl-1.5">
        <Arrow dir="right" className="size-2 fill-black" />
        <Tool name="picker" label="滴管" className="h-3 w-3.5" />
        <span className="w-2.5 text-center text-[#aaa]">&lt;</span>
        <button type="button" aria-label="无填充" className="flex size-[13px] items-center justify-center border border-[#777] bg-white"><Glyph name="cross" className="size-[11px]" /></button>
        <p className="flex-1 pr-4 text-center whitespace-nowrap text-[#a8a8a8] italic">将颜色(或对象)拖动至此处，以便将这些颜色与文档存储在一起</p>
      </div>
    </main>
  )
}

function SectionTitle({ children }) {
  return (
    <h2 className="flex h-[17px] items-center border-t border-[#999] text-[9px] font-bold text-black">
      <Glyph name="collapse" className="size-3" />
      <span className="ml-1">{children}</span>
      <span className="ml-auto flex w-3.5 justify-center"><Lock label={`${children}锁定`} /></span>
    </h2>
  )
}

function Row({ left, right }) {
  return (
    <div className="grid h-[19px] grid-cols-[15px_52px_14px_15px_52px_14px] items-center">
      {[left, right].map((f) => f && (
        <div key={f[1]} className="contents">
          {f[0] === 'ab' || f[0] === 'a中'
            ? <span className="text-center text-[8px] leading-none font-bold whitespace-nowrap text-[#55556b] underline">{f[0]}</span>
            : <Glyph name={f[0]} className="size-3 justify-self-center" />}
          <Spin label={f[1]} value={f[2]} />
          <Lock label={`${f[1]}锁定`} />
        </div>
      ))}
    </div>
  )
}

function TextDocker() {
  return (
    <section className="flex min-w-0 flex-1 flex-col">
      <div className="flex h-[17px] shrink-0 items-center bg-[#e6e6e6]">
        <Tool name="charA" label="字符" />
        <Tool name="para" label="段落" boxed className="ml-px size-4" />
        <Tool name="frame" label="图文框" className="ml-px size-4" />
        <Tool name="help" label="显示提示" className="mr-1.5 ml-auto size-4" />
        <Tool name="preview" label="预览" boxed />
      </div>
      <div className="flex min-h-0 flex-1 border-t border-[#aaa]">
        <div className="flex w-[162px] flex-col">
          <SectionTitle>段落</SectionTitle>
          <div className="flex h-[23px] items-center border-b border-[#dcdcdc] pl-0.5">
            <Tool name="noAlign" label="无对齐" boxed className="mr-1 size-[17px]" />
            <div className="flex flex-1 justify-between">
              <Tool name="alignL" label="左对齐" />
              <Tool name="alignC" label="居中" />
              <Tool name="alignR" label="右对齐" />
              <Tool name="justify" label="两端对齐" />
              <Tool name="force" label="强制两端对齐" />
              <button type="button" aria-label="调整" className="w-4 text-center text-[10px] leading-none text-[#44445c]">...</button>
            </div>
            <span className="flex w-3.5 justify-center"><Lock label="对齐锁定" /></span>
          </div>
          <div className="border-b border-[#dcdcdc] py-[3px]">
            <Row left={['indentL', '左行缩进', '.0 mm']} right={['indentF', '首行缩进', '.0 mm']} />
            <Row left={['indentR', '右行缩进', '.0 mm']} />
          </div>
          <div className="border-b border-[#dcdcdc] py-0.5">
            <Row left={['before', '段前间距', '100.0 %']} right={['line', '行间距', '100.0 %']} />
            <div className="grid h-5 grid-cols-[15px_52px_14px_67px_14px] items-center">
              <Glyph name="after" className="size-3 justify-self-center" />
              <Spin label="段后间距" value=".0 %" />
              <Lock label="段后间距锁定" />
              <Drop label="间距单位" value="%字符高度" className="ml-0.5 h-4 w-[65px] border border-[#999] bg-linear-to-b from-[#f2f2f2] to-[#dcdcdc]" />
              <Lock label="间距单位锁定" />
            </div>
          </div>
          <div className="pt-[3px] pb-0.5">
            <Row left={['ab', '字符间距', '20.0 %']} right={['word', '字间距', '100.0 %']} />
            <Row left={['a中', '语言间距', '.0 %']} />
          </div>
          <button type="button" aria-label="更多" className="mt-0.5 mb-1 flex h-2.5 items-center justify-center bg-[#e8e8e8]">
            <Arrow dir="down" className="size-1.5 fill-black" />
          </button>
          <SectionTitle>图文框</SectionTitle>
          <div className="grid h-6 grid-cols-[15px_37px_14px_36px_12px_34px_14px] items-center border-b border-[#dcdcdc]">
            <span className="relative flex justify-center"><Glyph name="frameFill" className="size-3" /><b className="absolute text-[9px] leading-3 text-[#33334a]">A</b></span>
            <button type="button" aria-label="背景填充" className="flex h-4 items-center border border-[#aaa] bg-white">
              <Glyph name="cross" className="mx-0.5 size-[11px]" />
              <span className="ml-auto flex h-full w-3 items-center justify-center border-l border-[#999] bg-[#e0e0e0]"><Arrow dir="down" className="size-1.5 fill-black" /></span>
            </button>
            <Lock label="背景锁定" />
            <span className="relative flex justify-center pl-4"><Glyph name="textBg" className="size-3" /><b className="absolute text-[9px] leading-3 text-[#22223a]">A</b></span>
            <Lock label="文本背景锁定" />
            <Tool name="frameAlign" label="垂直对齐" className="ml-auto size-4" />
            <Lock label="垂直对齐锁定" />
          </div>
          <div className="grid h-6 grid-cols-[15px_37px_14px_36px_12px_34px_14px] items-center">
            <Glyph name="cols" className="size-3 justify-self-center" />
            <Spin label="栏数" value="1" className="h-[15px] w-9" />
            <Lock label="栏数锁定" />
            <span className="flex justify-center pl-4"><Glyph name="evenCols" className="size-3" /></span>
            <Lock label="栏宽锁定" />
            <button type="button" aria-label="栏设置" className="ml-auto w-4 text-center text-[10px] leading-none text-[#44445c]">...</button>
            <Lock label="栏设置锁定" />
          </div>
        </div>
        <div className="flex flex-1 flex-col items-center border-r border-l border-[#dcdcdc] py-0.5">
          <Arrow dir="up" className="mt-0.5 size-1.5 fill-[#444]" />
          <div className="flex-[174]" />
          <VThumb className="w-2.5 flex-[268]" />
          <Arrow dir="down" className="mt-1 size-1.5 fill-[#444]" />
        </div>
      </div>
    </section>
  )
}

const DOCKER_TABS = [
  ['hint', '提示', 'h-[45px]'],
  ['objProps', '对象属性', 'h-16'],
  ['objManager', '对象管理器', 'h-[72px]'],
  ['charA', '文本属性', 'h-[63px]'],
]

function Docker() {
  const [tab, setTab] = useState('文本属性')

  return (
    <aside className="ml-[3px] flex w-[190px] shrink-0 flex-col border-l border-white">
      <div className="flex h-[13px] shrink-0 items-center bg-[#e3e3e3] px-px text-[9px] leading-none text-black">
        <h2>文本属性</h2>
        <button type="button" aria-label="折叠" className="ml-auto text-[11px] leading-none text-[#999]">»</button>
        <button type="button" aria-label="关闭泊坞窗" className="mr-1 ml-1.5 text-[11px] leading-none text-[#999]">×</button>
      </div>
      <div className="flex min-h-0 flex-1">
        <TextDocker />
        <div className="flex w-[14px] shrink-0 flex-col items-center bg-[#ebebeb] pt-px">
          {DOCKER_TABS.map(([icon, name, height]) => (
            <button
              key={name}
              type="button"
              onClick={() => setTab(name)}
              className={`flex w-full flex-col items-center border-b border-[#ececec] pt-0.5 ${height} ${tab === name ? 'bg-[#b3b3b3]' : 'bg-[#d9d9d9]'}`}
            >
              <Glyph name={icon} className="size-3" />
              <span className="mt-0.5 text-[9px] leading-3 whitespace-nowrap text-black [text-orientation:sideways] [writing-mode:vertical-rl]">{name}</span>
            </button>
          ))}
          <Tool name="plus" label="添加泊坞窗" className="mt-2.5 size-4" />
        </div>
      </div>
    </aside>
  )
}

function Palette() {
  return (
    <aside className="flex w-3 shrink-0 flex-col">
      <div className="flex h-[37px] shrink-0 flex-col items-center justify-between pt-0.5">
        <i className="w-1.5 border-t border-dotted border-[#aaa]" />
        <Arrow dir="right" className="size-2 fill-black" />
        <Glyph name="pickerOff" className="size-2.5" />
        <svg viewBox="0 0 8 5" className="mb-1 h-[5px] w-2" aria-hidden="true"><path d="M1 4l3-3 3 3" fill="none" stroke="#b5b5b5" strokeWidth="1.300" /></svg>
      </div>
      <button type="button" aria-label="无色" className="flex h-3 shrink-0 items-center justify-center border border-[#777] bg-white"><Glyph name="cross" className="size-2.5" /></button>
      <div className="flex min-h-0 flex-1 flex-col">
        {SWATCHES.map((c) => (
          <button key={c} type="button" aria-label={c} style={{ backgroundColor: c }} className="min-h-0 flex-1 border border-t-0 border-[#5c5c5c]/60" />
        ))}
        <i className="h-0.5 shrink-0 bg-[#50706c]" />
      </div>
      <div className="flex h-[30px] shrink-0 flex-col items-center justify-around text-[#999]">
        <svg viewBox="0 0 8 5" className="h-[5px] w-2" aria-hidden="true"><path d="M1 1l3 3 3-3" fill="none" stroke="#aaa" strokeWidth="1.300" /></svg>
        <span className="text-[11px] leading-none">»</span>
      </div>
    </aside>
  )
}

function StatusBar() {
  return (
    <footer className="flex h-[23px] shrink-0 items-center border-t border-[#dadada] pl-1 text-black">
      <span className="whitespace-nowrap">( -67.220, 223.974 )</span>
      <button type="button" aria-label="光标坐标" className="ml-1 flex size-2.5 items-center justify-center border border-black"><Arrow dir="right" className="size-1.5 fill-black" /></button>
      <div className="ml-auto flex items-center gap-1.5">
        <Glyph name="proof" className="size-3" />
        <span className="ml-0.5 flex items-center gap-1">
          <Glyph name="bucket" className="size-3" />
          <span className="flex size-3 items-center justify-center border border-[#777] bg-white"><Glyph name="cross" className="size-2.5" /></span>
        </span>
        <span className="-ml-1">无</span>
      </div>
      <div className="ml-[103px] flex h-4 w-[154px] items-center gap-1 border-l border-[#d3d3d3] pl-0.5 whitespace-nowrap">
        <Glyph name="pen" className="size-3" />
        <i className="size-3 bg-[#231815]" />
        <span className="-ml-0.5 whitespace-pre">C: 0 M: 0 Y: 0 K: 100  .200 mm</span>
      </div>
    </footer>
  )
}

function Watermark() {
  return (
    <svg viewBox="0 0 190 92" className="pointer-events-none absolute right-12 bottom-5 h-[92px] w-[190px] opacity-90" aria-hidden="true">
      <g fill="#fff" stroke="#cfcfcf" strokeWidth="2" strokeLinejoin="round" paintOrder="stroke">
        <text x="6" y="59" className="font-['Liberation_Sans',sans-serif] text-[39px] font-bold">Bai</text>
        <ellipse cx="74" cy="27" rx="7" ry="9" />
        <ellipse cx="87" cy="14" rx="7" ry="9" />
        <ellipse cx="103" cy="15" rx="7" ry="9" />
        <ellipse cx="112" cy="30" rx="7" ry="9" />
        <path d="M92 28c9 0 12 9 19 14 9 8 5 21-6 20-8-1-18-1-25 0-12 1-16-12-8-19 8-6 11-15 20-15z" />
        <text x="78" y="57" className="font-['Liberation_Sans',sans-serif] text-[24px] font-bold">du</text>
        <text x="121" y="58" className="font-['Noto_Sans_CJK_SC',sans-serif] text-[30px] font-bold">经验</text>
        <text x="5" y="84" className="font-['Open_Sans',sans-serif] text-[21px]">jingyan.baidu.com</text>
      </g>
    </svg>
  )
}

export default function App() {
  return (
    <div className="relative flex h-screen flex-col overflow-hidden bg-[#f3f3f3] font-['Open_Sans','Noto_Sans_CJK_SC',sans-serif] text-[8px] leading-[10px] text-[#222]">
      <TitleBar />
      <MenuBar />
      <StandardBar />
      <PropertyBar />
      <div className="flex min-h-0 flex-1">
        <Toolbox />
        <Workspace />
        <Docker />
        <Palette />
      </div>
      <StatusBar />
      <Watermark />
    </div>
  )
}
